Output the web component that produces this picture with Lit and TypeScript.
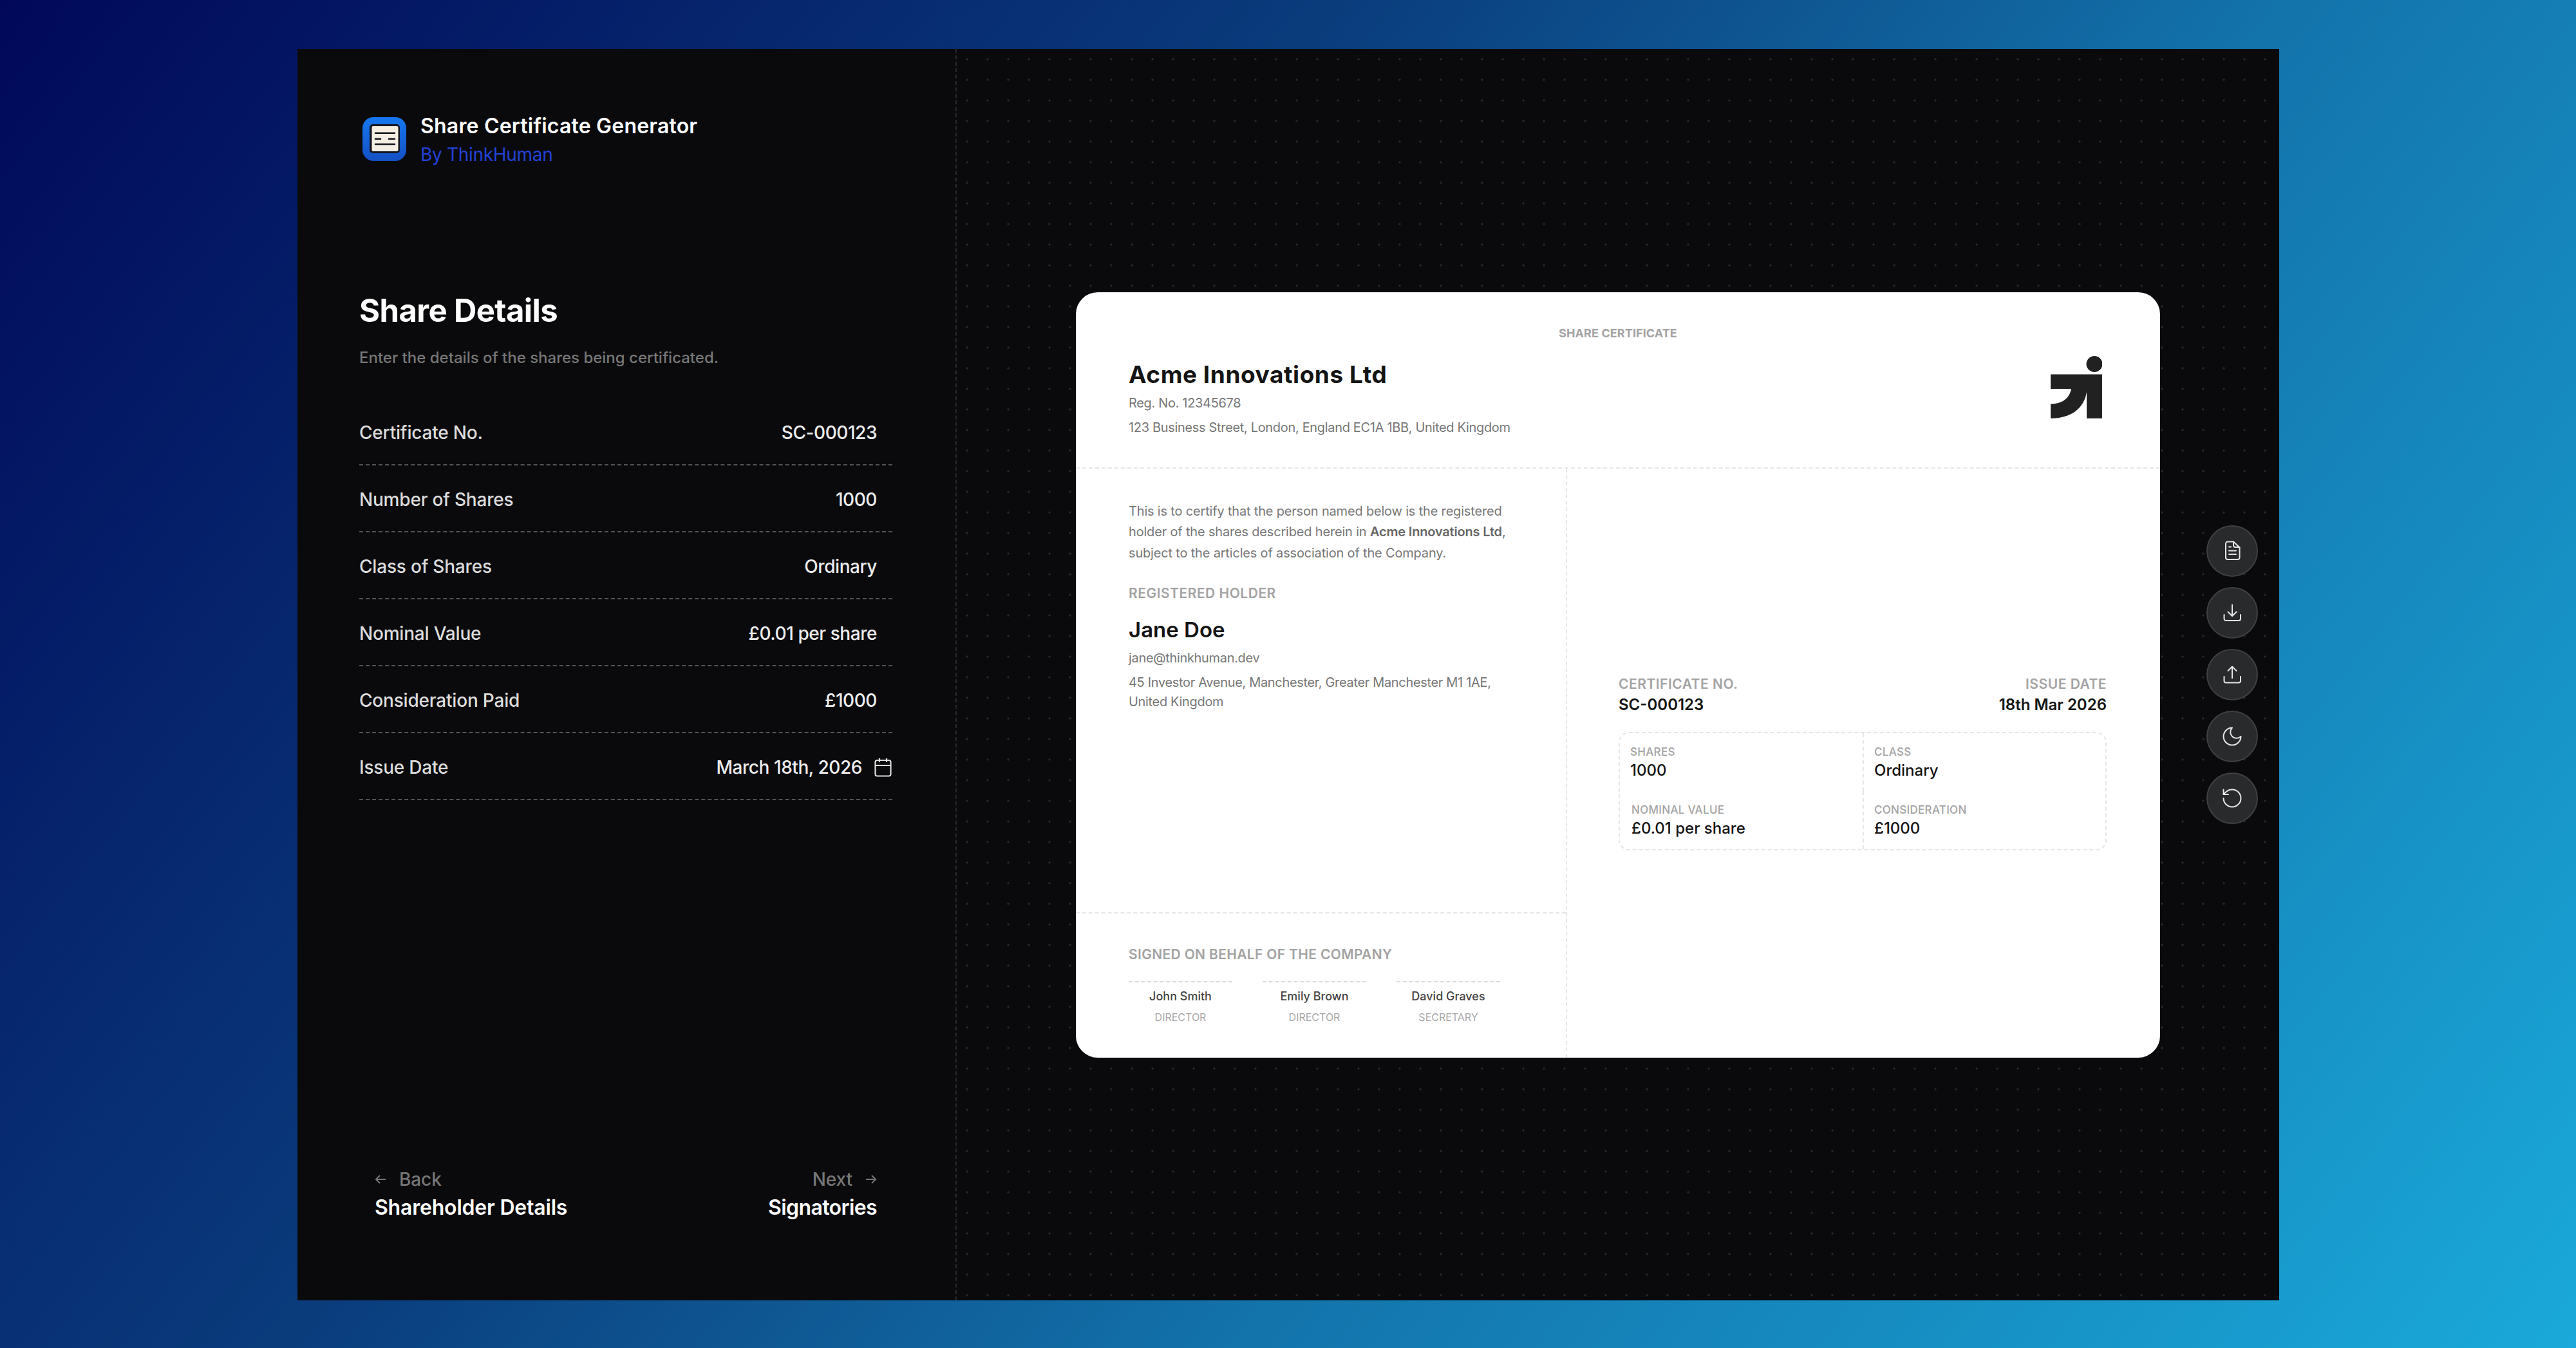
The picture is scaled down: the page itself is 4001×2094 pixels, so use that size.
import { LitElement, html, css, svg } from "lit";
import { customElement } from "lit/decorators.js";

const rows: [string, string][] = [
  ["Certificate No.", "SC-000123"],
  ["Number of Shares", "1000"],
  ["Class of Shares", "Ordinary"],
  ["Nominal Value", "£0.01 per share"],
  ["Consideration Paid", "£1000"],
];

const icons = [
  svg`<path d="M9 1.5h9L27.5 10.5V26a3 3 0 0 1-3 3H9a3 3 0 0 1-3-3V4.5a3 3 0 0 1 3-3Z"/><path d="M18 1.5v5.5a3 3 0 0 0 3 3h6.5"/><path d="M11 9.5h3M11 15.5h11M11 21h11"/>`,
  svg`<path d="M16 3.5V21M9.5 14.5 16 21l6.5-6.5"/><path d="M3.5 19v6a3 3 0 0 0 3 3H26a3 3 0 0 0 3-3v-6"/>`,
  svg`<path d="M16 21.5V3.5M9.5 10 16 3.5 22.5 10"/><path d="M3.5 19v6.5a3 3 0 0 0 3 3H26a3 3 0 0 0 3-3V19"/>`,
  svg`<g transform="translate(-2 -2) scale(1.5)" stroke-width="1.33"><path d="M12 3a6 6 0 0 0 9 9 9 9 0 1 1-9-9Z"/></g>`,
  svg`<g transform="translate(-2 -2) scale(1.5)" stroke-width="1.33"><path d="M3 12a9 9 0 1 0 9-9 9.75 9.75 0 0 0-6.74 2.74L3 8"/><path d="M3 3v5h5"/></g>`,
];

const signers = [
  ["John Smith", "DIRECTOR"],
  ["Emily Brown", "DIRECTOR"],
  ["David Graves", "SECRETARY"],
];

@customElement("app-root")
export class AppRoot extends LitElement {
  static styles = css`
    :host {
      display: block;
      width: 4001px;
      height: 2094px;
      font-family: Inter, "Liberation Sans", sans-serif;
      background: linear-gradient(128deg, #01085a 0%, #0a3c7c 37%, #1373ab 63%, #1aa9da 100%);
      box-sizing: border-box;
      padding: 76px 461px 74px 462px;
    }
    * { box-sizing: border-box; }
    .window { display: flex; width: 100%; height: 100%; background: #0a0a0c; }

    .sidebar {
      width: 1024px; flex: none; height: 100%;
      display: flex; flex-direction: column;
      padding: 100px 98px 122px 96px;
      border-right: 2px dashed rgba(255, 255, 255, 0.13);
    }
    .brand { display: flex; gap: 22px; margin-left: 5px; }
    .app-icon { width: 68px; height: 68px; flex: none; margin-top: 6px; }
    .brand-title { font-size: 32px; line-height: 40px; font-weight: 600; color: #fff; letter-spacing: 0.2px; white-space: nowrap; }
    .brand-sub { font-size: 28px; line-height: 40px; color: #2342d8; letter-spacing: -0.3px; margin-top: 4px; }
    h1 { margin: 193px 0 0; font-size: 49px; line-height: 60px; font-weight: 700; color: #fff; letter-spacing: -0.6px; }
    .lead { margin: 27px 0 0; font-size: 24px; line-height: 32px; font-weight: 500; color: #777; letter-spacing: 0; }
    .fields { margin-top: 47px; }
    .row {
      height: 104px; display: flex; align-items: center; justify-content: space-between;
      padding: 4px 24px 0 0; border-bottom: 2px dashed rgba(255, 255, 255, 0.3);
      font-size: 28px; letter-spacing: -0.2px; font-weight: 500;
    }
    .row .k { color: #dcdcdc; }
    .row .v { color: #ececec; letter-spacing: -0.45px; }
    .row.date { padding-right: 1px; }
    .date-val { display: flex; align-items: center; gap: 19px; }
    .date-val svg { width: 27px; height: 30px; fill: none; stroke: #dcdcdc; stroke-width: 2.2; }
    .nav { margin-top: auto; display: flex; justify-content: space-between; padding: 0 24px 0 24px; }
    .nav-item { display: flex; flex-direction: column; }
    .nav-item.end { align-items: flex-end; }
    .nav-top { display: flex; align-items: center; gap: 20px; font-size: 28px; line-height: 44px; color: #777; font-weight: 500; letter-spacing: -0.1px; }
    .nav-top svg { width: 18px; height: 18px; fill: none; stroke: #777; stroke-width: 2; }
    .nav-bottom { font-size: 32px; line-height: 44px; color: #fff; font-weight: 600; letter-spacing: -0.2px; }
    .nav-item.end .nav-bottom { letter-spacing: -0.6px; }

    .canvas {
      position: relative; flex: 1; min-width: 0; height: 100%;
      display: flex; align-items: center; justify-content: center;
      background-image: radial-gradient(circle, rgba(255, 255, 255, 0.13) 1.4px, transparent 1.8px);
      background-size: 32px 32px;
    }
    .actions { position: absolute; right: 33px; top: 50%; transform: translateY(-50%); display: flex; flex-direction: column; gap: 16px; }
    .action {
      width: 80px; height: 80px; border-radius: 50%;
      background: #292a2c; border: 2px solid #3f4042;
      display: flex; align-items: center; justify-content: center;
    }
    .action svg { width: 32px; height: 32px; fill: none; stroke: #e6e6e6; stroke-width: 2; stroke-linecap: round; stroke-linejoin: round; overflow: visible; }

    .card {
      width: 1684px; height: 1189px; background: #fff; border-radius: 34px;
      display: flex; flex-direction: column; overflow: hidden;
      color: #141414;
    }
    .card-head { height: 274px; flex: none; padding: 52px 90px 0 82px; border-bottom: 2px dashed #e6e6e6; }
    .eyebrow { text-align: center; margin-right: -8px; font-size: 18px; line-height: 24px; font-weight: 700; color: #a3a3a3; letter-spacing: 0.1px; }
    .head-row { display: flex; justify-content: space-between; margin-top: 30px; }
    .company { font-size: 37px; line-height: 44px; font-weight: 700; color: #141414; letter-spacing: 0.55px; }
    .meta { font-size: 20px; line-height: 30px; color: #777; letter-spacing: -0.33px; }
    .meta.a { margin-top: 7px; }
    .meta.b { margin-top: 8px; }
    .mark { width: 80px; height: 97px; margin-top: -7px; flex: none; }
    .card-body { flex: 1; display: flex; min-height: 0; }
    .col-left { width: 763px; flex: none; display: flex; flex-direction: column; border-right: 2px dashed #e6e6e6; }
    .holder { flex: 1; padding: 50px 40px 0 82px; border-bottom: 2px dashed #e6e6e6; }
    .para { margin: 0; font-size: 20px; line-height: 32.5px; color: #777; white-space: nowrap; letter-spacing: -0.18px; }
    .para b { font-weight: 600; color: #666; }
    .label { font-size: 21px; line-height: 28px; font-weight: 600; color: #a3a3a3; letter-spacing: 0.5px; }
    .holder .label { margin-top: 33px; }
    .holder-name { margin-top: 20px; font-size: 33px; line-height: 44px; font-weight: 600; color: #141414; }
    .sign { height: 224px; flex: none; padding: 50px 0 0 82px; }
    .sign .label { white-space: nowrap; letter-spacing: 0.33px; }
    .signers { display: grid; grid-template-columns: repeat(3, 161px); gap: 47px; margin-top: 27px; }
    .signer { border-top: 2px dashed #dcdcdc; padding-top: 8px; text-align: center; white-space: nowrap; }
    .signer-name { font-size: 18px; line-height: 28px; font-weight: 500; color: #444; }
    .signer-role { margin-top: 6px; font-size: 16px; line-height: 24px; color: #a8a8a8; }
    .col-right { flex: 1; display: flex; flex-direction: column; justify-content: center; padding: 0 83px 0 80px; }
    .top-pair { display: flex; justify-content: space-between; }
    .pair-r { text-align: right; }
    .val { margin-top: 2px; font-size: 24px; line-height: 32px; font-weight: 600; color: #141414; }
    .box {
      margin-top: 26px; border: 2px dashed #e6e6e6; border-radius: 16px;
      display: grid; grid-template-columns: 379px 1fr; grid-auto-rows: 90px;
    }
    .cell { padding: 16.5px 0 0 16px; }
    .cell.l { border-right: 2px dashed #e6e6e6; }
    .cell.nudge { padding-left: 18px; }
    .cell-label { font-size: 17px; line-height: 24px; font-weight: 500; color: #a3a3a3; letter-spacing: 0.3px; }
    .cell-val { margin-top: 1px; font-size: 24px; line-height: 32px; font-weight: 500; color: #141414; }
  `;

  render() {
    return html`
      <div class="window">
        <aside class="sidebar">
          <div class="brand">
            <svg class="app-icon" viewBox="0 0 68 68">
              <defs><linearGradient id="ai" x1="0" y1="0" x2="0" y2="1"><stop offset="0" stop-color="#1677ee"/><stop offset="1" stop-color="#1550c4"/></linearGradient></defs>
              <rect width="68" height="68" rx="17" fill="url(#ai)"/>
              <rect x="11" y="11" width="47" height="45" rx="5" fill="#14171f"/>
              <rect x="14.5" y="14" width="41" height="39" rx="2" fill="#f4efe2"/>
              <path d="M20 24.7h30M20 33.7h8M41 33.7h9M20 42h30" stroke="#14171f" stroke-width="2.6" stroke-linecap="round"/>
            </svg>
            <div>
              <div class="brand-title">Share Certificate Generator</div>
              <div class="brand-sub">By ThinkHuman</div>
            </div>
          </div>
          <h1>Share Details</h1>
          <p class="lead">Enter the details of the shares being certificated.</p>
          <div class="fields">
            ${rows.map(([k, v]) => html`<div class="row"><span class="k">${k}</span><span class="v">${v}</span></div>`)}
            <div class="row date">
              <span class="k">Issue Date</span>
              <span class="v date-val">March 18th, 2026
                <svg viewBox="0 0 27 30"><rect x="1.5" y="4" width="24" height="24.5" rx="3"/><path d="M1.5 12h24M8 1v6M19 1v6"/></svg>
              </span>
            </div>
          </div>
          <div class="nav">
            <div class="nav-item">
              <div class="nav-top"><svg viewBox="0 0 18 18"><path d="M17 9H2M8 3 2 9l6 6"/></svg>Back</div>
              <div class="nav-bottom">Shareholder Details</div>
            </div>
            <div class="nav-item end">
              <div class="nav-top">Next<svg viewBox="0 0 18 18"><path d="M1 9h15M10 3l6 6-6 6"/></svg></div>
              <div class="nav-bottom">Signatories</div>
            </div>
          </div>
        </aside>
        <main class="canvas">
          <section class="card">
            <header class="card-head">
              <div class="eyebrow">SHARE CERTIFICATE</div>
              <div class="head-row">
                <div>
                  <div class="company">Acme Innovations Ltd</div>
                  <div class="meta a">Reg. No. 12345678</div>
                  <div class="meta b">123 Business Street, London, England EC1A 1BB, United Kingdom</div>
                </div>
                <svg class="mark" viewBox="0 0 80 97">
                  <circle cx="68" cy="12.5" r="12.5" fill="#212121"/>
                  <path d="M0 28.5H80V97H56V56C52 81 32 97 0 97V74.500C15 74.500 29 68 32 51H0Z" fill="#212121"/>
                </svg>
              </div>
            </header>
            <div class="card-body">
              <div class="col-left">
                <div class="holder">
                  <p class="para">This is to certify that the person named below is the registered<br>holder of the shares described herein in <b>Acme Innovations Ltd</b>,<br>subject to the articles of association of the Company.</p>
                  <div class="label">REGISTERED HOLDER</div>
                  <div class="holder-name">Jane Doe</div>
                  <div class="meta a">jane@thinkhuman.dev</div>
                  <div class="meta b">45 Investor Avenue, Manchester, Greater Manchester M1 1AE,<br>United Kingdom</div>
                </div>
                <div class="sign">
                  <div class="label">SIGNED ON BEHALF OF THE COMPANY</div>
                  <div class="signers">
                    ${signers.map(([n, r]) => html`<div class="signer"><div class="signer-name">${n}</div><div class="signer-role">${r}</div></div>`)}
                  </div>
                </div>
              </div>
              <div class="col-right">
                <div class="top-pair">
                  <div><div class="label">CERTIFICATE NO.</div><div class="val">SC-000123</div></div>
                  <div class="pair-r"><div class="label">ISSUE DATE</div><div class="val">18th Mar 2026</div></div>
                </div>
                <div class="box">
                  <div class="cell l"><div class="cell-label">SHARES</div><div class="cell-val">1000</div></div>
                  <div class="cell"><div class="cell-label">CLASS</div><div class="cell-val">Ordinary</div></div>
                  <div class="cell l nudge"><div class="cell-label">NOMINAL VALUE</div><div class="cell-val">£0.01 per share</div></div>
                  <div class="cell"><div class="cell-label">CONSIDERATION</div><div class="cell-val">£1000</div></div>
                </div>
              </div>
            </div>
          </section>
          <div class="actions">
            ${icons.map((i) => html`<div class="action"><svg viewBox="0 0 32 32">${i}</svg></div>`)}
          </div>
        </main>
      </div>
    `;
  }
}
